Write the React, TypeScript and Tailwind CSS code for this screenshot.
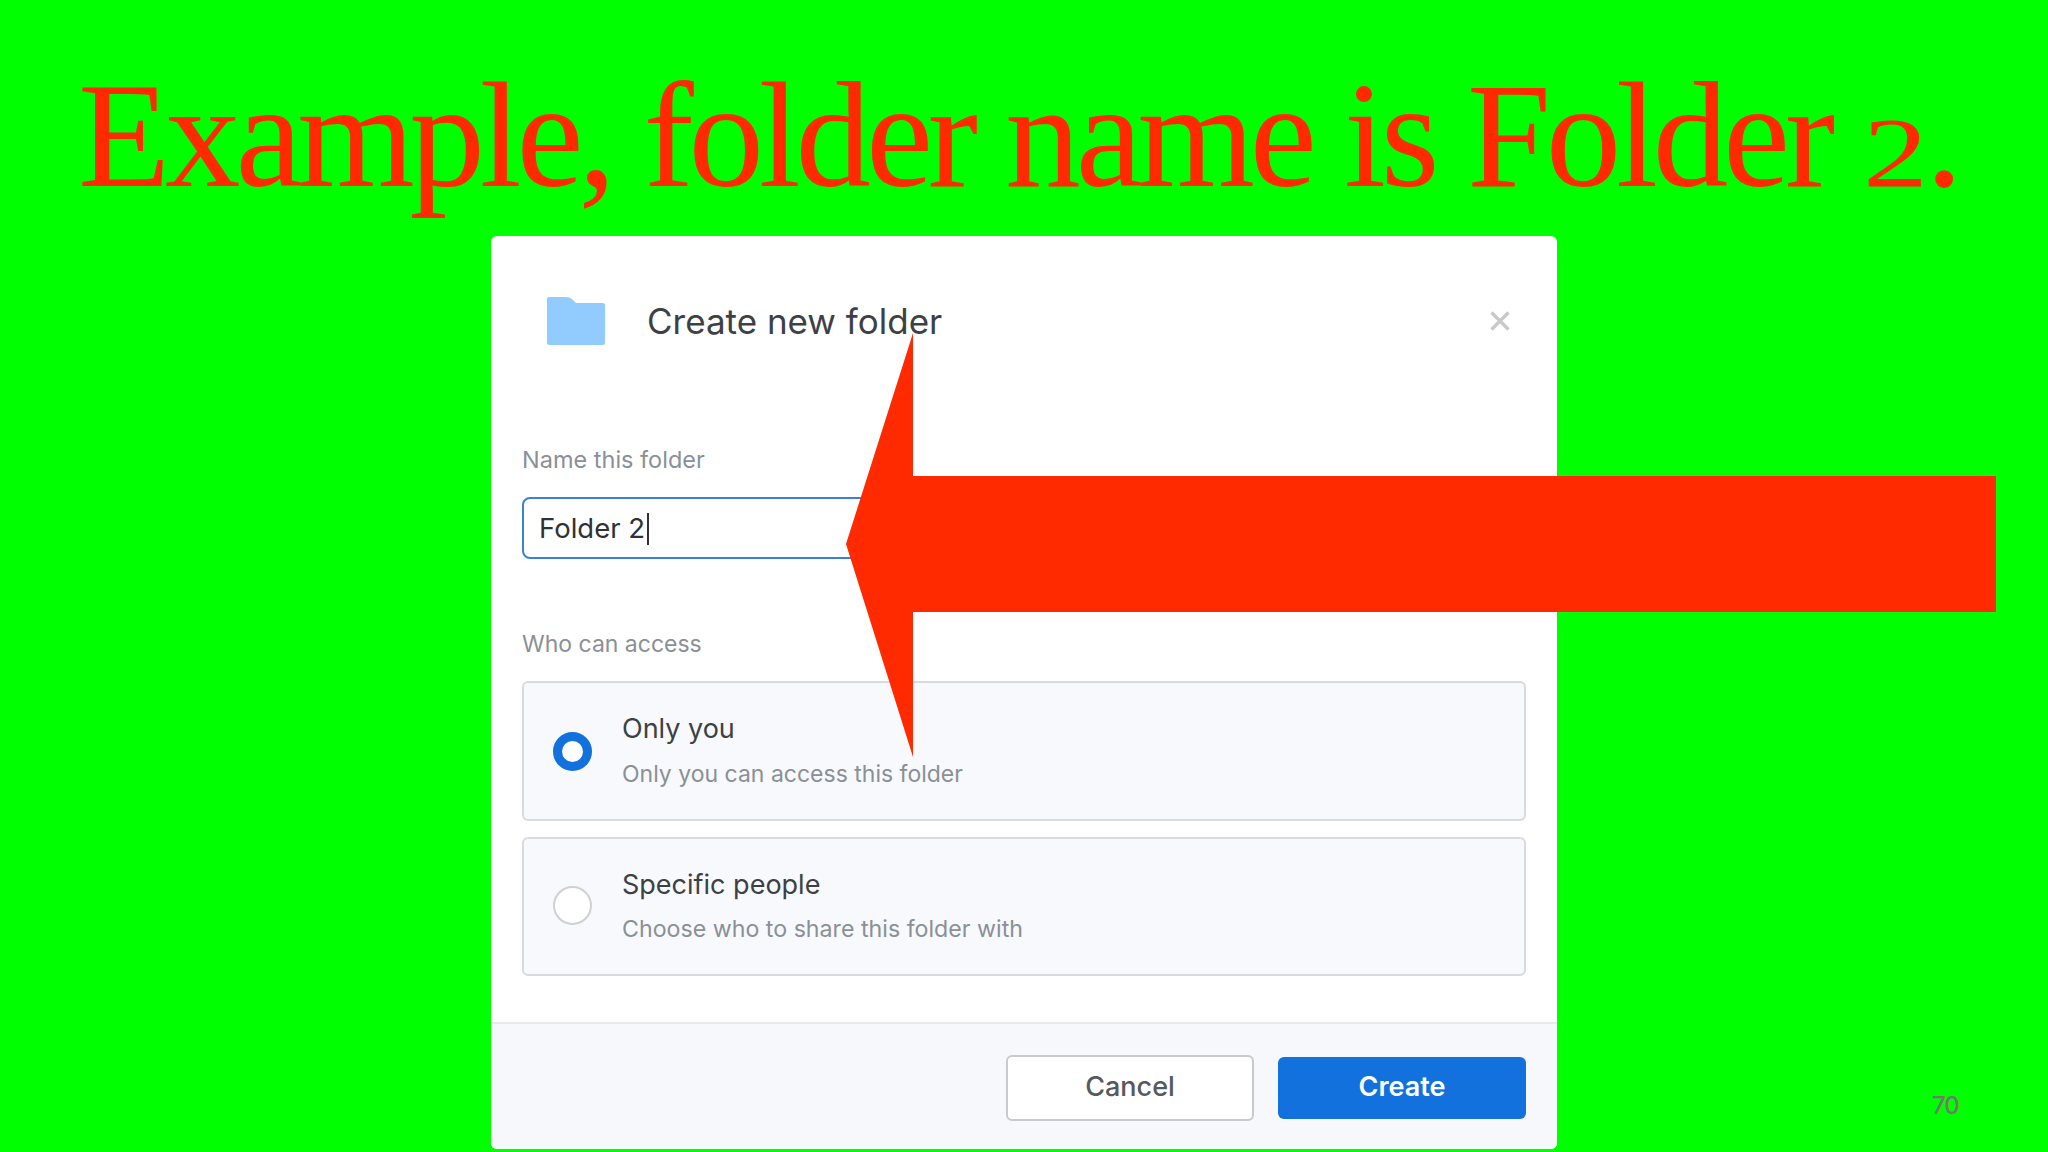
export default function App() {
  const ui = "font-['Inter','Liberation_Sans',sans-serif]";
  return (
    <div className={`relative flex h-[1152px] w-[2048px] flex-col items-center overflow-hidden bg-[#00ff00] ${ui}`}>
      <h1 className="mt-[50px] mr-[12px] h-[186px] whitespace-nowrap font-['Liberation_Serif',serif] text-[151px] leading-[170px] font-normal tracking-[-5.2px] text-[#ff2a00]">
        Example, folder name is Folder <span className="mr-[18px] inline-block origin-left scale-x-130 text-[100px]">2</span>.
      </h1>

      <div className="flex h-[913px] w-[1066px] flex-col rounded-[6px] bg-white">
        <div className="flex h-[170px] shrink-0 items-center pl-[56px] pr-[47px]">
          <svg width="58" height="48" viewBox="0 0 58 48" className="shrink-0">
            <path d="M2 0h16c4 0 6 1 8 3l3 3h27c1 0 2 1 2 2v38c0 1-1 2-2 2H2c-1 0-2-1-2-2V2c0-1 1-2 2-2z" fill="#92ccff" />
          </svg>
          <div className="ml-[42px] text-[35px] leading-[44px] text-[#3d4146]">Create new folder</div>
          <svg width="20" height="20" viewBox="0 0 20 20" className="ml-auto shrink-0">
            <path d="M1.5 1.5l17 17M18.5 1.5l-17 17" stroke="#c9c9c9" strokeWidth="3.4" fill="none" />
          </svg>
        </div>

        <div className="flex flex-col pl-[31px] pr-[31px]">
          <div className="mt-[38px] text-[23.5px] leading-[32px] text-[#8a9096]">Name this folder</div>
          <div className="mt-[21px] flex h-[62px] items-center rounded-[8px] border-2 border-[#3a7fd8] pl-[15px] pt-[2px] text-[27.5px] text-[#2e3237]">
            <span>Folder 2</span>
            <span className="ml-[2px] h-[32px] w-[2px] bg-[#2e3237]" />
          </div>

          <div className="mt-[69px] text-[23px] leading-[32px] text-[#8a9096]">Who can access</div>
          <div className="mt-[21px] flex h-[140px] items-center rounded-[6px] border-2 border-[#d8dade] bg-[#f7f9fc] pl-[29px]">
            <span className="size-[39px] shrink-0 rounded-full border-[9px] border-[#1371de] bg-white" />
            <div className="ml-[30px] flex flex-col pb-[2px]">
              <span className="text-[27px] leading-[36px] text-[#3d4146]">Only you</span>
              <span className="mt-[11px] text-[23px] leading-[32px] text-[#8a9096]">Only you can access this folder</span>
            </div>
          </div>
          <div className="mt-[16px] flex h-[139px] items-center rounded-[6px] border-2 border-[#d8dade] bg-[#f7f9fc] pl-[29px]">
            <span className="-mt-[3px] size-[39px] shrink-0 rounded-full border-2 border-[#cfd0d2] bg-white" />
            <div className="ml-[30px] flex flex-col pb-[2px]">
              <span className="text-[27px] leading-[36px] text-[#3d4146]">Specific people</span>
              <span className="mt-[10px] text-[23.2px] leading-[32px] text-[#8a9096]">Choose who to share this folder with</span>
            </div>
          </div>
        </div>

        <div className="mt-auto flex h-[127px] items-center justify-end gap-[24px] rounded-b-[6px] border-t-2 border-[#e8e9ec] bg-[#f7f8fb] pt-[2px] pr-[31px]">
          <div className="flex h-[66px] w-[248px] items-center justify-center rounded-[6px] border-2 border-[#c9cacc] bg-white text-[27px] font-medium text-[#55595e]">Cancel</div>
          <div className="flex h-[62px] w-[248px] items-center justify-center rounded-[6px] bg-[#1371de] text-[27px] font-semibold text-white">Create</div>
        </div>
      </div>

      <svg width="1150" height="424" viewBox="0 0 1150 424" className="absolute left-[846px] top-[333px]">
        <polygon points="0,211 67,0 67,143 1150,143 1150,279 67,279 67,424" fill="#ff2a00" />
      </svg>

      <div className="absolute left-[1932px] top-[1092px] text-[24px] leading-[28px] font-medium tracking-[-1px] text-[#707870]">70</div>
    </div>
  );
}
